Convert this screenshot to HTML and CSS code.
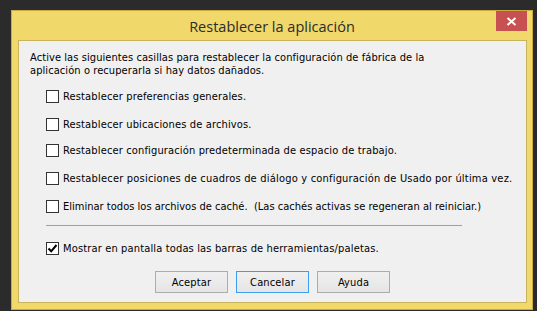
FILE: index.html
```html
<!DOCTYPE html>
<html lang="es">
<head>
<meta charset="utf-8">
<title>Restablecer la aplicación</title>
<link rel="stylesheet" href="styles.css">
</head>
<body>
<div class="window">
  <div class="titlebar">
    <span class="title">Restablecer la aplicación</span>
    <button class="close" aria-label="Cerrar">
      <svg width="11" height="9" viewBox="0 0 11 9"><path d="M1.5 1 L9.5 8 M9.5 1 L1.5 8" stroke="#fff" stroke-width="2"/></svg>
    </button>
  </div>
  <div class="panel">
    <p class="intro">Active las siguientes casillas para restablecer la configuración de fábrica de la<br>aplicación o recuperarla si hay datos dañados.</p>
    <div class="options">
      <label class="row r1"><span class="box"></span>Restablecer preferencias generales.</label>
      <label class="row r2"><span class="box"></span>Restablecer ubicaciones de archivos.</label>
      <label class="row r3"><span class="box"></span>Restablecer configuración predeterminada de espacio de trabajo.</label>
      <label class="row r4"><span class="box"></span>Restablecer posiciones de cuadros de diálogo y configuración de Usado por última vez.</label>
      <label class="row r5"><span class="box"></span>Eliminar todos los archivos de caché.&nbsp; (Las cachés activas se regeneran al reiniciar.)</label>
      <div class="sep"></div>
      <label class="row r6"><span class="box checked"><svg width="11" height="11" viewBox="0 0 11 11"><path d="M1.5 5.5 L4.2 8.3 L9.5 2" fill="none" stroke="#000" stroke-width="2"/></svg></span>Mostrar en pantalla todas las barras de herramientas/paletas.</label>
    </div>
    <div class="buttons">
      <button class="btn">Aceptar</button>
      <button class="btn default">Cancelar</button>
      <button class="btn">Ayuda</button>
    </div>
  </div>
</div>
</body>
</html>
```
FILE: styles.css
```css
html, body {
  margin: 0;
  padding: 0;
  background: #2b2b2b;
  height: 311px;
  overflow: hidden;
}
.window {
  margin: 10px 0 0 11px;
  width: 522px;
  height: 300px;
  box-sizing: border-box;
  background: #f0d86b;
  border: 1px solid #c8ab42;
  position: relative;
  display: flex;
  flex-direction: column;
}
.titlebar {
  height: 29px;
  display: flex;
  align-items: center;
  justify-content: center;
}
.title {
  font-family: "Open Sans", "Noto Sans", sans-serif;
  font-size: 14.5px;
  color: #2b2b2b;
  margin-top: 2px;
}
.close {
  position: absolute;
  top: 0;
  right: 5px;
  width: 31px;
  height: 20px;
  border: 0;
  padding: 0;
  background: #c75050;
  display: flex;
  align-items: center;
  justify-content: center;
}
.panel {
  margin: 0 5px 0 6px;
  height: 263px;
  box-sizing: border-box;
  border: 1px solid #c9b35c;
  background: #f0f0f0;
  padding: 10px 11px 0 11px;
  font-family: "DejaVu Sans Condensed", "DejaVu Sans", sans-serif;
  font-size: 11px;
  letter-spacing: 0.15px;
  color: #000;
}
.intro {
  margin: 0;
  line-height: 13px;
  letter-spacing: 0.08px;
}
.options {
  display: flex;
  flex-direction: column;
  padding-left: 16px;
  margin-top: 13px;
}
.row {
  display: flex;
  align-items: center;
  height: 13px;
  line-height: 13px;
  white-space: nowrap;
}
.r2, .r4, .r5 { margin-top: 15px; }
.r3 { margin-top: 13px; }
.r4 { letter-spacing: 0.2px; }
.r5 { letter-spacing: 0.02px; }
.box {
  width: 13px;
  height: 13px;
  box-sizing: border-box;
  border: 1px solid #333;
  background: #fff;
  margin-right: 4px;
  flex: none;
  display: flex;
  align-items: center;
  justify-content: center;
}
.sep {
  height: 1px;
  width: 416px;
  background: #a0a0a0;
  margin-top: 12px;
}
.r6 { margin-top: 16px; }
.buttons {
  display: flex;
  justify-content: center;
  gap: 8px;
  margin-top: 16px;
}
.btn {
  width: 73px;
  height: 22px;
  box-sizing: border-box;
  border: 1px solid #acacac;
  background: linear-gradient(#f0f0f0, #e5e5e5);
  font-family: "DejaVu Sans Condensed", "DejaVu Sans", sans-serif;
  font-size: 11px;
  letter-spacing: 0.15px;
  color: #000;
  padding: 0;
}
.btn.default {
  border-color: #3c9cf0;
}
```
